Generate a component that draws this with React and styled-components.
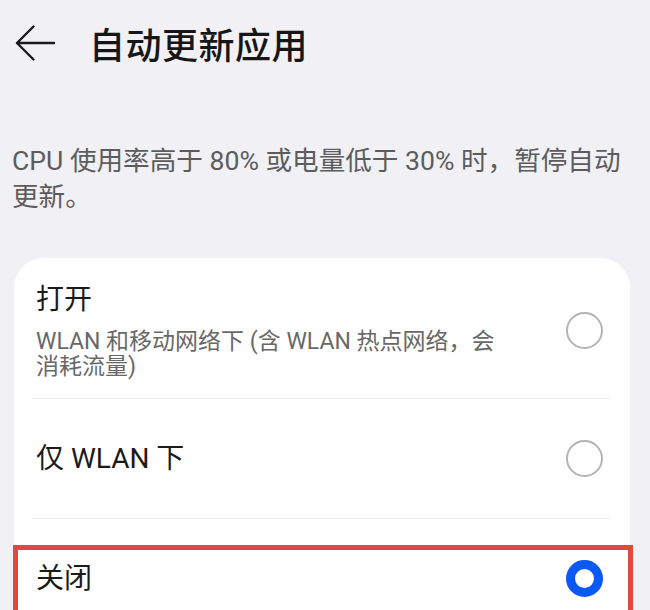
import React from 'react';
import styled, { createGlobalStyle, css } from 'styled-components';

const GlobalStyle = createGlobalStyle`
  html, body {
    margin: 0;
    padding: 0;
    background: #f1f0f4;
  }
  body {
    font-family: Roboto, "Noto Sans CJK SC", sans-serif;
    color: #1a1a1a;
  }
`;

const Page = styled.div`
  width: 650px;
  height: 610px;
  overflow: hidden;
  background: #f1f0f4;
`;

const Header = styled.header`
  height: 86px;
  display: flex;
  align-items: center;
  padding-left: 14px;
  gap: 33px;
`;

const BackButton = styled.button`
  width: 42px;
  height: 42px;
  padding: 0;
  border: none;
  background: transparent;
  display: flex;
  align-items: center;
  justify-content: center;
`;

const Title = styled.h1`
  margin: 0;
  font-size: 36px;
  font-weight: 500;
  letter-spacing: 0.5px;
  color: #161616;
`;

const Description = styled.p`
  margin: 57px 14px 0 12px;
  font-size: 26.6px;
  line-height: 36px;
  color: #5c5c5c;
`;

const Card = styled.div`
  margin: 43px 20px 0 14px;
  background: #ffffff;
  border-radius: 30px;
`;

const Row = styled.div`
  position: relative;
  display: flex;
  align-items: center;
  justify-content: space-between;
  gap: 24px;
  min-height: ${(p) => (p.$tall ? '140px' : '119px')};
  padding: ${(p) => (p.$tall ? '24px 27px 19px 22px' : '0 27px 0 22px')};
  box-sizing: border-box;

  ${(p) =>
    p.$highlighted &&
    css`
      &::after {
        content: '';
        position: absolute;
        top: 26px;
        left: -1px;
        right: -3px;
        height: 120px;
        border: 5px solid #e0493b;
        pointer-events: none;
      }
    `}
`;

const Texts = styled.div`
  flex: 1;
  display: flex;
  flex-direction: column;
`;

const Label = styled.div`
  font-size: 28px;
  line-height: 36px;
  color: #1b1b1b;
`;

const Hint = styled.div`
  margin-top: 11px;
  font-size: 23px;
  line-height: 25px;
  color: #686868;
  max-width: 470px;
`;

const Divider = styled.div`
  height: 1px;
  margin: 0 20px 0 18px;
  background: #ececec;
`;

const Radio = styled.span`
  flex: none;
  width: 37px;
  height: 37px;
  box-sizing: border-box;
  border-radius: 50%;
  background: #fff;
  border: ${(p) => (p.$checked ? '9px solid #0a59f7' : '2px solid #b4b4b4')};
`;

const options = [
  {
    label: '打开',
    hint: 'WLAN 和移动网络下 (含 WLAN 热点网络，会消耗流量)',
  },
  { label: '仅 WLAN 下' },
  { label: '关闭', checked: true },
];

const App = () => {
  return (
    <Page>
      <GlobalStyle />
      <Header>
        <BackButton aria-label="返回">
          <svg width="42" height="42" viewBox="0 0 42 42" fill="none">
            <path
              d="M3 21 H40 M3 21 L19.5 4.5 M3 21 L19.5 37.5"
              stroke="#1a1a1a"
              strokeWidth="2.4"
              strokeLinecap="round"
              strokeLinejoin="round"
            />
          </svg>
        </BackButton>
        <Title>自动更新应用</Title>
      </Header>

      <Description>
        CPU 使用率高于 80% 或电量低于 30% 时，暂停自动更新。
      </Description>

      <Card>
        {options.map((opt, i) => (
          <React.Fragment key={opt.label}>
            {i > 0 && <Divider />}
            <Row $tall={!!opt.hint} $highlighted={opt.checked}>
              <Texts>
                <Label>{opt.label}</Label>
                {opt.hint && <Hint>{opt.hint}</Hint>}
              </Texts>
              <Radio $checked={opt.checked} />
            </Row>
          </React.Fragment>
        ))}
      </Card>
    </Page>
  );
};

export default App;
